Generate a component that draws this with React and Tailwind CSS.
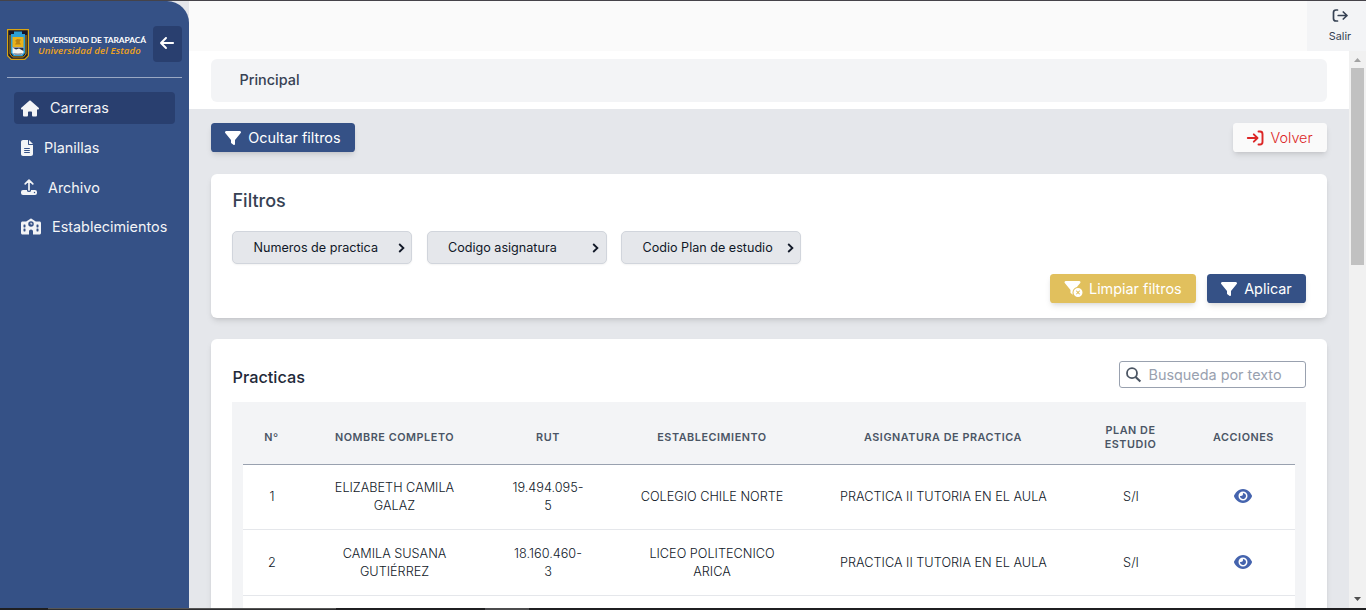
import React from "react";
import {
  FaHouse,
  FaFileLines,
  FaSchool,
  FaArrowLeft,
  FaFilter,
  FaFilterCircleXmark,
  FaEye,
} from "react-icons/fa6";

const columns = [
  { label: "Nº", width: "w-[57px]" },
  { label: "Nombre completo", width: "w-[189px]" },
  { label: "Rut", width: "w-[118px]" },
  { label: "Establecimiento", width: "w-[210px]" },
  { label: "Asignatura de practica", width: "w-[252px]" },
  { label: "Plan de estudio", width: "w-[123px]" },
  { label: "Acciones", width: "w-[103px]" },
];

const rows = [
  { height: "h-[65px]", cells: ["1", "ELIZABETH CAMILA GALAZ", "19.494.095-5", "COLEGIO CHILE NORTE", "PRACTICA II TUTORIA EN EL AULA", "S/I"] },
  { height: "h-[66px]", cells: ["2", "CAMILA SUSANA GUTIÉRREZ", "18.160.460-3", "LICEO POLITECNICO ARICA", "PRACTICA II TUTORIA EN EL AULA", "S/I"] },
];

const cellPadding = ["pr-[13px] pl-[14px]", "px-[22px]", "px-[22px]", "px-[24px]", "pr-[13px] pl-[14px] whitespace-nowrap", "pr-[13px] pl-[14px]"];

function Crest() {
  return (
    <svg className="h-[31px] w-[22px] shrink-0" viewBox="0 0 22 31">
      <path d="M0 0H22V27L18 31H4L0 27Z" fill="#d9a514" />
      <path d="M1.2 1.2H20.8V26.4L17.4 29.8H4.6L1.2 26.4Z" fill="#17172b" />
      <path d="M3 6V25L5.5 28H16.5L19 25V6" fill="none" stroke="#d9a514" strokeWidth="0.9" />
      <path d="M7 2.5H15V5H18V24L15.5 27H6.5L4 24V5H7Z" fill="#2c9fd6" />
      <path d="M5.5 8H16.5V18H5.5Z" fill="#e9b21b" />
      <path d="M8 12L10 10L14 10.5L12.5 13L14 15.5H8L9.5 13Z" fill="#b98212" />
      <path d="M5.5 18H16.5V24L14 26H8L5.5 24Z" fill="#f4f4f1" />
      <path d="M5.5 18.5L9 20.5L12 19.5L16.5 22V18.5Z" fill="#26304c" />
      <path d="M6 24L11 24.5L16 24L14 26H8Z" fill="#8b93a5" />
    </svg>
  );
}

function UploadIcon() {
  return (
    <svg className="h-[16px] w-[16px]" viewBox="0 0 16 16" fill="none">
      <path d="M8 11V1.6M4.2 4.9L8 1.2L11.8 4.9" stroke="#f3f4f6" strokeWidth="1.7" strokeLinecap="round" strokeLinejoin="round" />
      <path fillRule="evenodd" d="M2 11H6V11.8Q6 13 8 13T10 11.8V11H14Q16 11 16 13V14Q16 16 14 16H2Q0 16 0 14V13Q0 11 2 11ZM13.5 12.8A.7.7 0 1 0 13.5 14.2A.7.7 0 1 0 13.5 12.8Z" fill="#f3f4f6" />
    </svg>
  );
}

function ExitIcon() {
  return (
    <svg className="h-[14px] w-[16px]" viewBox="0 0 16 14" fill="none" stroke="currentColor" strokeWidth="1.7" strokeLinecap="round" strokeLinejoin="round">
      <path d="M5.5 1H4Q1.5 1 1.5 3.5V9.5Q1.5 12 4 12H5.5" />
      <path d="M6.2 6.5H15M11.3 3L15 6.5L11.3 10" />
    </svg>
  );
}

function BackIcon() {
  return (
    <svg className="h-[16px] w-[18px]" viewBox="0 0 18 16" fill="none" stroke="currentColor" strokeWidth="1.9" strokeLinecap="round" strokeLinejoin="round">
      <path d="M12.5 1.5H14Q16.5 1.5 16.5 4V12Q16.5 14.5 14 14.5H12.5" />
      <path d="M1.8 8H11.3M7.8 4.3L11.5 8L7.8 11.7" />
    </svg>
  );
}

function SearchIcon() {
  return (
    <svg className="h-[16px] w-[16px] shrink-0" viewBox="0 0 16 16" fill="none" stroke="#4b5563" strokeWidth="1.8">
      <circle cx="6" cy="6.2" r="5" />
      <path d="M9.6 9.9L14.4 14.6" strokeWidth="2.1" />
    </svg>
  );
}

function NavItem({ icon, label, active }) {
  return (
    <a className={`flex h-8 items-center gap-[11px] rounded-[4px] pl-[7px] text-[14.4px] text-gray-100 ${active ? "bg-[#293f6f]" : ""}`}>
      {icon}
      <span>{label}</span>
    </a>
  );
}

function Sidebar() {
  return (
    <aside className="w-[189px] shrink-0 bg-[#e5e6ea]">
      <div className="h-full rounded-tr-[22px] bg-[#355186] px-[7px] pt-[25px]">
        <div className="flex h-[52px] items-start border-b border-[#9aa8c3]">
          <div className="flex pt-[3px]">
            <Crest />
            <div className="ml-[4px] w-[116px] pt-[6px] whitespace-nowrap">
              <div className="font-['Lato',sans-serif] text-[8.4px] leading-[11px] font-bold tracking-[-0.08px] text-white">UNIVERSIDAD DE TARAPACÁ</div>
              <div className="pl-[5px] font-['Open_Sans',sans-serif] text-[9.6px] leading-[10px] font-semibold tracking-[0.12px] text-[#f0a31c] italic">Universidad del Estado</div>
            </div>
          </div>
          <button className="ml-[4px] flex h-9 w-[29px] items-center justify-center rounded-[4px] bg-[#293f6f] pr-px pb-[2px] text-white">
            <FaArrowLeft size={16} />
          </button>
        </div>
        <nav className="flex flex-col gap-[7.7px] px-[7px] pt-[14px]">
          <NavItem active label="Carreras" icon={<FaHouse className="h-[17px] w-[18px]" />} />
          <NavItem label="Planillas" icon={<FaFileLines className="h-4 w-3" />} />
          <NavItem label="Archivo" icon={<UploadIcon />} />
          <div className="-mt-[0.5px]">
            <NavItem label="Establecimientos" icon={<FaSchool className="h-[17px] w-[20px]" />} />
          </div>
        </nav>
      </div>
    </aside>
  );
}

function FilterSelect({ label }) {
  return (
    <button className="flex h-[33px] w-[180px] items-center rounded-[5px] border border-gray-300 bg-gray-200 pr-[6.5px] pl-[20.5px] text-[12.6px] text-gray-900 shadow-xs">
      <span className="flex-1 pt-px text-left whitespace-nowrap">{label}</span>
      <svg className="h-[10px] w-[7px]" viewBox="0 0 7 10" fill="none" stroke="#111827" strokeWidth="1.8">
        <path d="M1.2 1L5.4 5L1.2 9" />
      </svg>
    </button>
  );
}

function PracticeTable() {
  return (
    <div className="h-[240px] bg-gray-100 px-[11px] pt-[9px]">
      <table className="w-[1052px] table-fixed border-collapse text-center">
        <thead>
          <tr className="h-[53px] border-b border-gray-400 text-[10.8px] leading-[14.4px] tracking-[0.56px] text-gray-600 uppercase">
            {columns.map((c) => (
              <th key={c.label} className={`${c.width} px-[20px] pt-[2px] font-semibold ${c.label === "Plan de estudio" ? "" : "whitespace-nowrap"}`}>
                {c.label}
              </th>
            ))}
          </tr>
        </thead>
        <tbody>
          {rows.map((row) => (
            <tr key={row.cells[0]} className={`${row.height} border-b border-gray-200 bg-white text-[12.7px] leading-[18px] font-light text-gray-900`}>
              {row.cells.map((cell, i) => (
                <td key={i} className={`pt-px ${cellPadding[i]}`}>
                  {cell}
                </td>
              ))}
              <td className="pr-px pb-px">
                <FaEye className="mx-auto text-[#4564ae]" size={18} />
              </td>
            </tr>
          ))}
          <tr className="h-[66px] bg-white">
            <td colSpan={7} />
          </tr>
        </tbody>
      </table>
    </div>
  );
}

function Scrollbar() {
  return (
    <div className="flex w-[17px] shrink-0 flex-col items-center bg-[#f1f1f1] pt-[7px] pb-[7px]">
      <svg className="h-[4px] w-[7px]" viewBox="0 0 7 4"><path d="M3.5 0L7 4H0Z" fill="#a3a3a3" /></svg>
      <div className="mt-[6px] h-[197px] w-[13px] bg-[#c1c1c1]" />
      <svg className="mt-auto h-[4px] w-[7px]" viewBox="0 0 7 4"><path d="M3.5 4L7 0H0Z" fill="#505050" /></svg>
    </div>
  );
}

export default function App() {
  return (
    <div className="flex h-[610px] w-[1366px] flex-col overflow-hidden font-['Inter',sans-serif] text-gray-700">
      <div className="h-px shrink-0 bg-[#454349]" />
      <div className="flex min-h-0 flex-1">
        <Sidebar />
        <div className="flex min-w-0 flex-1 flex-col">
          <header className="flex h-[50px] shrink-0 justify-end bg-[#fafafa]">
            <button className="flex w-[59px] flex-col items-center bg-gray-100 pt-[8px] pl-[7px] text-[10.8px] leading-[16px] text-gray-700">
              <ExitIcon />
              <span className="mt-[6px]">Salir</span>
            </button>
          </header>
          <div className="flex min-h-0 flex-1">
            <main className="flex min-w-0 flex-1 flex-col overflow-hidden bg-gray-200">
              <div className="h-[58px] shrink-0 bg-white px-[22px] pt-2">
                <div className="flex h-[43px] items-center rounded-[6px] bg-gray-100 pb-px pl-[28.5px] text-[14.4px] font-medium">Principal</div>
              </div>
              <div className="flex shrink-0 flex-col px-[22px] pt-[14px]">
                <div className="flex justify-between text-[14.4px]">
                  <button className="flex h-[29px] w-[144px] items-center gap-[7.2px] rounded-[3.6px] bg-[#355186] pl-[14px] text-white shadow-md">
                    <FaFilter size={16} />
                    Ocultar filtros
                  </button>
                  <button className="flex h-[29px] w-[94px] items-center gap-[6.5px] rounded-[3.6px] bg-[#fafafa] pl-[13px] text-[#dc2626] shadow-md">
                    <BackIcon />
                    <span className="font-light">Volver</span>
                  </button>
                </div>
                <section className="mt-[22px] flex h-[144px] flex-col rounded-[6px] bg-white px-[21px] pt-[14px] shadow-md">
                  <h2 className="pl-[0.5px] text-[18px] leading-[25px] font-medium">Filtros</h2>
                  <div className="mt-[18px] flex gap-[14.5px]">
                    <FilterSelect label="Numeros de practica" />
                    <FilterSelect label="Codigo asignatura" />
                    <FilterSelect label="Codio Plan de estudio" />
                  </div>
                  <div className="mt-[10px] flex justify-end gap-[11px] text-[14.4px] text-white">
                    <button className="flex h-[29px] w-[146px] items-center gap-[6px] rounded-[3.6px] bg-[#e1c05d] pl-[14px] shadow-md">
                      <FaFilterCircleXmark className="h-4 w-[19px]" />
                      Limpiar filtros
                    </button>
                    <button className="flex h-[29px] w-[99px] items-center gap-[7.2px] rounded-[3.6px] bg-[#355186] pl-[14px] shadow-md">
                      <FaFilter size={16} />
                      Aplicar
                    </button>
                  </div>
                </section>
                <section className="mt-[21px] rounded-[6px] bg-white px-[21px] pt-[22px] shadow-md">
                  <div className="flex h-[41px] items-start justify-between">
                    <h2 className="pt-[4px] pl-[0.5px] text-[16.3px] leading-[25px] font-medium text-gray-800">Practicas</h2>
                    <label className="flex h-[27px] w-[187px] items-center gap-[7px] rounded-[3px] border border-gray-400 bg-white pl-[5.5px] text-[14.4px] text-gray-400">
                      <SearchIcon />
                      Busqueda por texto
                    </label>
                  </div>
                  <PracticeTable />
                </section>
              </div>
            </main>
            <Scrollbar />
          </div>
        </div>
      </div>
      <div className="flex h-[2px] shrink-0 bg-[#1f1f21]">
        <div className="ml-[48px] h-[2px] w-[288px] border-t border-[#555555] bg-[#2e2e30]" />
        <div className="ml-[149px] h-[2px] w-[44px] bg-[#4c4c4e]" />
      </div>
    </div>
  );
}
